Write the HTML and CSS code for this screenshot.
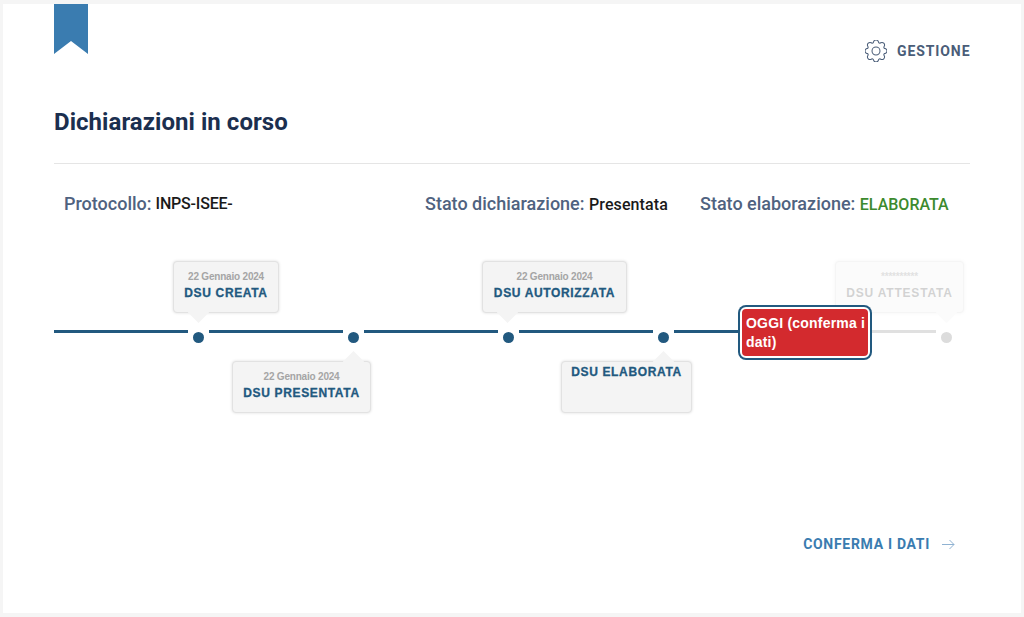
FILE: index.html
```html
<!DOCTYPE html>
<html lang="it">
<head>
<meta charset="utf-8">
<title>Dichiarazioni in corso</title>
<link rel="stylesheet" href="styles.css">
</head>
<body>
<main class="card">
  <header class="top">
    <svg class="bookmark" viewBox="0 0 34 50" width="34" height="50"><path d="M0 0H34V50L17 37L0 50Z" fill="#3a7cb0"/></svg>
    <a class="manage">
      <svg class="gear" viewBox="0 0 16 16" width="22" height="22" fill="none" stroke="#4a5d78" stroke-width=".75"><circle cx="8" cy="8" r="2.9"/><path d="M9.796 1.343c-.527-1.79-3.065-1.79-3.592 0l-.094.319a.873.873 0 0 1-1.255.52l-.292-.16c-1.64-.892-3.433.902-2.54 2.541l.159.292a.873.873 0 0 1-.52 1.255l-.319.094c-1.79.527-1.79 3.065 0 3.592l.319.094a.873.873 0 0 1 .52 1.255l-.16.292c-.892 1.64.901 3.434 2.541 2.54l.292-.159a.873.873 0 0 1 1.255.52l.094.319c.527 1.79 3.065 1.79 3.592 0l.094-.319a.873.873 0 0 1 1.255-.52l.292.16c1.64.893 3.434-.902 2.54-2.541l-.159-.292a.873.873 0 0 1 .52-1.255l.319-.094c1.79-.527 1.79-3.065 0-3.592l-.319-.094a.873.873 0 0 1-.52-1.255l.16-.292c.893-1.64-.902-3.433-2.541-2.54l-.292.159a.873.873 0 0 1-1.255-.52l-.094-.319z"/></svg>
      <span>GESTIONE</span>
    </a>
  </header>
  <h1 class="title">Dichiarazioni in corso</h1>
  <div class="info">
    <div class="info-item info-protocol"><span class="label">Protocollo:</span> <span class="value tight">INPS-ISEE-</span></div>
    <div class="info-item info-state"><span class="label">Stato dichiarazione:</span> <span class="value">Presentata</span></div>
    <div class="info-item"><span class="label">Stato elaborazione:</span> <span class="value ok">ELABORATA</span></div>
  </div>
  <section class="timeline">
    <div class="line l1"></div>
    <div class="dot"><div class="tip up t1"><small>22 Gennaio 2024</small><b>DSU CREATA</b></div></div>
    <div class="line l2"></div>
    <div class="dot"><div class="tip down t2"><small>22 Gennaio 2024</small><b>DSU PRESENTATA</b></div></div>
    <div class="line l3"></div>
    <div class="dot"><div class="tip up t3"><small>22 Gennaio 2024</small><b>DSU AUTORIZZATA</b></div></div>
    <div class="line l4"></div>
    <div class="dot"><div class="tip down t4"><b>DSU ELABORATA</b></div></div>
    <div class="line l5"></div>
    <div class="today">OGGI (conferma i dati)</div>
    <div class="line l6"></div>
    <div class="dot off"><div class="tip up t5"><small>**********</small><b>DSU ATTESTATA</b></div></div>
  </section>
  <footer class="actions">
    <a class="confirm"><span>CONFERMA I DATI</span>
      <svg viewBox="0 0 13 11" width="13" height="11" fill="none" stroke="#8fb2d2" stroke-width="1"><path d="M0 5.5H12M7.5 1L12 5.5L7.5 10"/></svg>
    </a>
  </footer>
</main>
</body>
</html>
```

FILE: styles.css
```css
* { box-sizing: border-box; }
html, body { margin: 0; height: 617px; overflow: hidden; }
body { background: #f5f5f5; padding: 4px 3px; font-family: "Roboto", "Liberation Sans", sans-serif; }
.card { background: #fff; height: 609px; padding: 0 51px; display: flex; flex-direction: column; }
.top { display: flex; justify-content: space-between; align-items: flex-start; height: 97px; }
.bookmark { display: block; }
.manage { display: flex; align-items: center; gap: 10px; margin-top: 36px; color: #4a5d78; font-weight: 700; font-size: 14px; letter-spacing: .9px; }
.manage span { width: 73px; white-space: nowrap; }
.gear { display: block; }
.title { margin: 0; height: 63px; padding-top: 5px; font-size: 24px; line-height: 32px; font-weight: 700; letter-spacing: .05px; color: #1b2f4f; border-bottom: 1px solid #e5e5e5; }
.info { display: flex; height: 97px; padding: 28px 0 0 10px; font-size: 18px; line-height: 24px; }
.info-item { white-space: nowrap; }
.info-protocol { width: 361px; display: flex; gap: 4px; }
.info-state { width: 275px; }
.label { color: #4f6280; font-weight: 500; }
.value { color: #1a1a1a; font-size: 16px; font-weight: 500; letter-spacing: .1px; }
.tight { letter-spacing: -.2px; }
.ok { color: #3c8a2e; letter-spacing: 0; }
.timeline { display: flex; align-items: flex-start; height: 201px; padding-top: 60px; font-family: "Liberation Sans", Arial, sans-serif; }
.line { height: 3px; margin-top: 9px; margin-right: 5px; background: #22597f; }
.l1 { width: 134px; }
.l2 { width: 133.5px; margin-left: 5px; }
.l3 { width: 134px; margin-left: 5px; }
.l4 { width: 134px; margin-left: 5px; }
.l5 { width: 66px; margin: 9px 0 0 5px; }
.l6 { width: 66px; margin: 9px 5px 0 0; background: #e0e0e0; }
.dot { position: relative; flex: none; width: 11px; height: 11px; margin-top: 11px; border-radius: 50%; background: #22597f; }
.off { background: #dcdcdc; }
.tip { position: absolute; display: flex; flex-direction: column; align-items: center; height: 52px; padding-top: 7px; background: #f4f4f4; border: 1px solid #e2e2e2; border-radius: 4px; box-shadow: 0 0 3px rgba(0, 0, 0, .14); white-space: nowrap; }
.tip::after { content: ""; position: absolute; width: 15px; height: 15px; background: #f4f4f4; transform: rotate(45deg); }
.up { bottom: 30px; }
.up::after { bottom: -8px; }
.down { top: 29px; }
.down::after { top: -8px; }
.tip small { position: relative; z-index: 1; font-size: 10px; line-height: 16px; font-weight: 700; letter-spacing: -.2px; color: #a5a5a5; }
.tip b { position: relative; z-index: 1; margin-top: -1px; font-size: 12px; line-height: 18px; letter-spacing: .65px; -webkit-text-stroke: .3px #22597f; color: #22597f; }
.t1 { left: -20px; width: 106px; }
.t1::after { left: 17px; }
.t2 { left: -115.5px; width: 139px; }
.t2::after { left: 112.5px; }
.t3 { left: -20.5px; width: 145px; }
.t3::after { left: 17px; }
.t4 { left: -96.5px; width: 131px; }
.t4 b { margin-top: -6px; }
.t4::after { left: 93.5px; }
.t5 { left: -105.5px; width: 129px; opacity: .32; }
.t5 b { -webkit-text-stroke: 0; color: #777; letter-spacing: .8px; }
.t5::after { left: 102.5px; }
.today { flex: none; position: relative; z-index: 2; width: 130px; height: 51px; margin-top: -14px; padding: 5px 0 0 4.5px; background: #d32a2e; color: #fff; font-size: 14px; line-height: 19px; font-weight: 700; letter-spacing: .2px; border: 2px solid #fff; border-radius: 6px; box-shadow: 0 0 0 2px #22597f; }
.actions { display: flex; justify-content: flex-end; padding-right: 15px; margin-top: 72px; }
.confirm { display: flex; align-items: center; gap: 12px; color: #3a7cb0; font-size: 14px; line-height: 20px; font-weight: 700; letter-spacing: .7px; }
```
